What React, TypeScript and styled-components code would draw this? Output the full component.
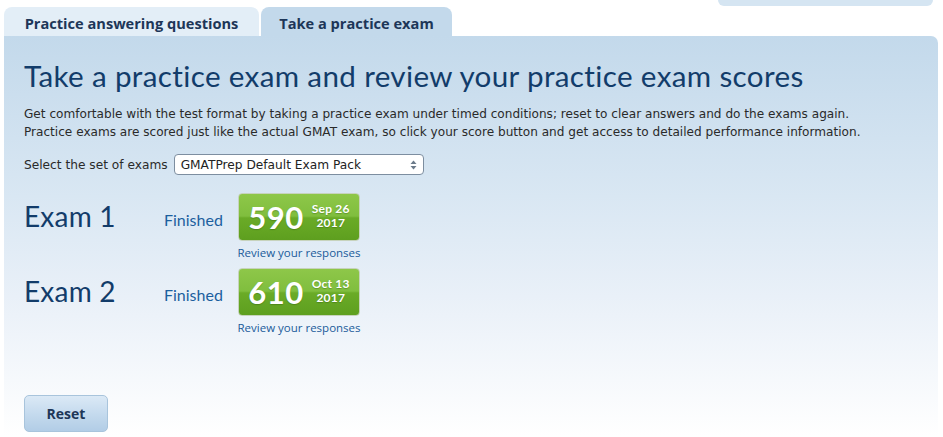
import React from 'react';
import styled, { createGlobalStyle } from 'styled-components';

const GlobalStyle = createGlobalStyle`
  html, body {
    margin: 0;
    padding: 0;
    background: #ffffff;
  }
  body {
    font-family: "DejaVu Sans", Verdana, sans-serif;
  }
`;

const Page = styled.div`
  width: 943px;
  height: 437px;
  overflow: hidden;
  display: flex;
  flex-direction: column;
`;

const TopStrip = styled.div`
  display: flex;
  justify-content: flex-end;
  padding-right: 10px;
  height: 7px;
`;

const StripTab = styled.div`
  width: 215px;
  height: 6px;
  background: #d5e5f2;
  border-radius: 0 0 6px 6px;
`;

const TabBar = styled.div`
  display: flex;
  gap: 2px;
  padding-left: 4px;
  height: 29px;
`;

const Tab = styled.div<{ $active?: boolean }>`
  display: flex;
  align-items: center;
  justify-content: center;
  width: ${(p) => (p.$active ? '191px' : '255px')};
  background: ${(p) => (p.$active ? '#c3d9eb' : '#e3eef7')};
  border-radius: 8px 8px 0 0;
  font-family: "Open Sans", Lato, sans-serif;
  font-weight: 700;
  font-size: 14.6px;
  color: #1d3658;
  padding-top: 2px;
`;

const Panel = styled.div`
  flex: 1;
  margin: 0 5px 0 4px;
  border-radius: 0 7px 0 0;
  background: linear-gradient(to bottom, #c3d9eb 0%, #d9e7f3 40%, #e9f0f8 65%, #ffffff 100%);
  padding: 22px 20px 0 20px;
  display: flex;
  flex-direction: column;
`;

const Title = styled.h1`
  margin: 0;
  font-family: Lato, "Open Sans", sans-serif;
  font-weight: 400;
  font-size: 29.6px;
  line-height: 36px;
  color: #123c6a;
  letter-spacing: 0.35px;
`;

const Intro = styled.p`
  margin: 11px 0 0 0;
  font-size: 12.1px;
  line-height: 18px;
  color: #2a2a2a;
`;

const PackRow = styled.div`
  display: flex;
  align-items: center;
  gap: 6px;
  margin-top: 13px;
  font-size: 12.2px;
  color: #2a2a2a;
`;

const PackSelect = styled.div`
  width: 250px;
  height: 21px;
  box-sizing: border-box;
  border: 1px solid #7d8ea0;
  border-radius: 4px;
  background: #ffffff;
  display: flex;
  align-items: center;
  justify-content: space-between;
  padding: 0 6px 0 6px;
  font-size: 12.2px;
  color: #222222;
`;

const ExamList = styled.div`
  display: flex;
  flex-direction: column;
  gap: 7px;
  margin-top: 18px;
`;

const ExamRow = styled.div`
  display: grid;
  grid-template-columns: 140px 74px auto;
  align-items: start;
`;

const ExamName = styled.div`
  font-family: Lato, "Open Sans", sans-serif;
  font-size: 28px;
  color: #123c6a;
  line-height: 30px;
  padding-top: 8px;
  letter-spacing: 0.2px;
`;

const Status = styled.div`
  font-family: Lato, "Open Sans", sans-serif;
  font-size: 16px;
  color: #1c5f9e;
  padding-top: 17px;
`;

const ScoreCell = styled.div`
  display: flex;
  flex-direction: column;
  align-items: center;
  width: 122px;
`;

const ScoreButton = styled.div`
  width: 122px;
  height: 48px;
  box-sizing: border-box;
  border: 1px solid #c7d3bd;
  border-radius: 4px;
  background: linear-gradient(to bottom, #8ec749 0%, #80be3e 48%, #6aab27 52%, #5e9f1f 100%);
  display: flex;
  align-items: center;
  justify-content: center;
  gap: 8px;
  color: #ffffff;
  font-family: Lato, "Open Sans", sans-serif;
  font-weight: 700;
  text-shadow: 0 1px 1px rgba(40, 80, 10, 0.35);
`;

const Score = styled.span`
  font-size: 31px;
  line-height: 1;
  letter-spacing: 0.5px;
`;

const ScoreDate = styled.span`
  display: flex;
  flex-direction: column;
  align-items: center;
  font-size: 12px;
  line-height: 14px;
  letter-spacing: 0.2px;
  margin-bottom: 2px;
`;

const ReviewLink = styled.a`
  margin-top: 4px;
  white-space: nowrap;
  font-family: "Open Sans", Lato, sans-serif;
  font-size: 11.5px;
  line-height: 16px;
  color: #1a5b9a;
  text-decoration: none;
`;

const Footer = styled.div`
  margin-top: auto;
  padding-bottom: 5px;
`;

const ResetButton = styled.button`
  width: 84px;
  height: 37px;
  border: 1px solid #a8c4dc;
  border-radius: 5px;
  background: linear-gradient(to bottom, #dbe9f6 0%, #c3d9ed 55%, #b2cde6 100%);
  font-family: "Open Sans", Lato, sans-serif;
  font-weight: 700;
  font-size: 14px;
  color: #1d3658;
`;

const SortArrows = () => (
  <svg width="7" height="10" viewBox="0 0 7 10">
    <path d="M3.5 0.5 L6.5 4 H0.5 Z" fill="#6b7a8a" />
    <path d="M3.5 9.5 L6.5 6 H0.5 Z" fill="#6b7a8a" />
  </svg>
);

interface IExam {
  name: string;
  score: number;
  day: string;
  year: string;
}

const EXAMS: IExam[] = [
  { name: 'Exam 1', score: 590, day: 'Sep 26', year: '2017' },
  { name: 'Exam 2', score: 610, day: 'Oct 13', year: '2017' },
];

const App = () => (
  <Page>
    <GlobalStyle />
    <TopStrip>
      <StripTab />
    </TopStrip>
    <TabBar>
      <Tab>Practice answering questions</Tab>
      <Tab $active>Take a practice exam</Tab>
    </TabBar>
    <Panel>
      <Title>Take a practice exam and review your practice exam scores</Title>
      <Intro>
        Get comfortable with the test format by taking a practice exam under timed conditions; reset to clear answers and do the exams again.
        <br />
        Practice exams are scored just like the actual GMAT exam, so click your score button and get access to detailed performance information.
      </Intro>
      <PackRow>
        Select the set of exams
        <PackSelect>
          GMATPrep Default Exam Pack
          <SortArrows />
        </PackSelect>
      </PackRow>
      <ExamList>
        {EXAMS.map((exam) => (
          <ExamRow key={exam.name}>
            <ExamName>{exam.name}</ExamName>
            <Status>Finished</Status>
            <ScoreCell>
              <ScoreButton>
                <Score>{exam.score}</Score>
                <ScoreDate>
                  <span>{exam.day}</span>
                  <span>{exam.year}</span>
                </ScoreDate>
              </ScoreButton>
              <ReviewLink href="#">Review your responses</ReviewLink>
            </ScoreCell>
          </ExamRow>
        ))}
      </ExamList>
      <Footer>
        <ResetButton>Reset</ResetButton>
      </Footer>
    </Panel>
  </Page>
);

export default App;
